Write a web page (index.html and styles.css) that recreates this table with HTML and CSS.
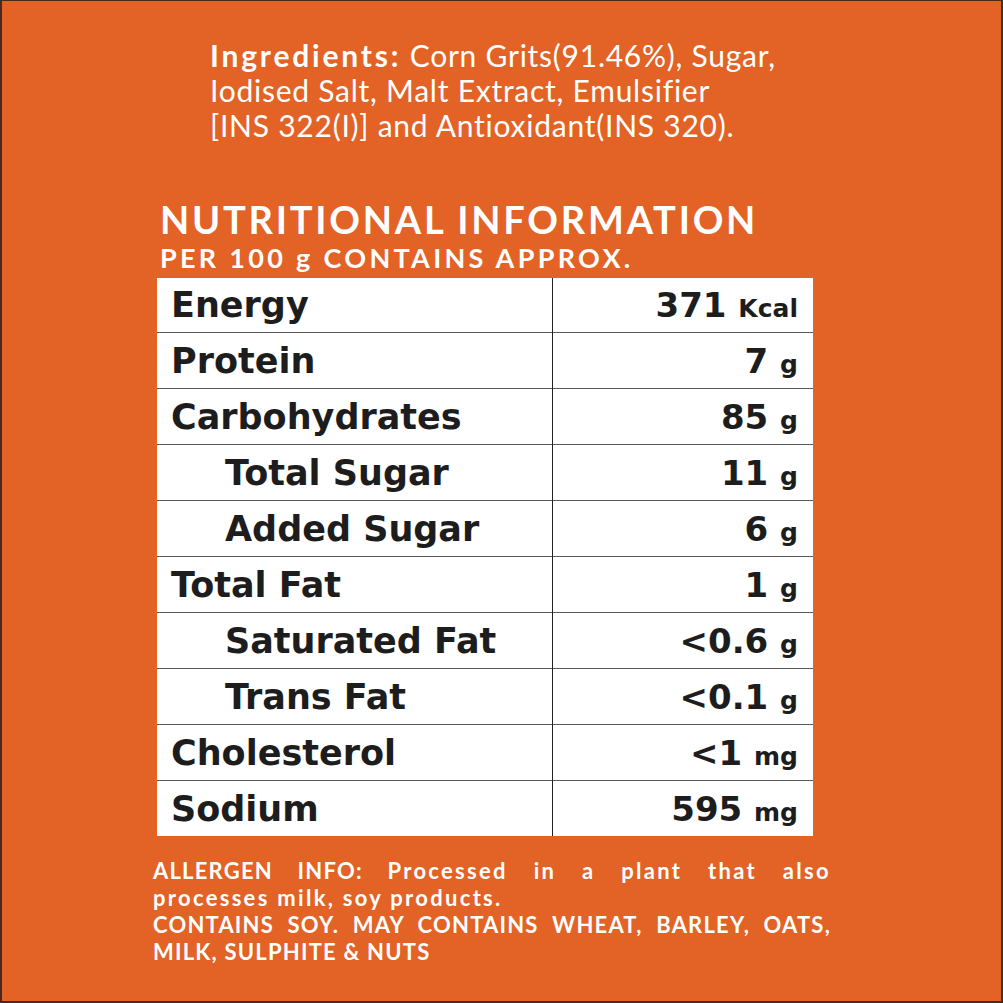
FILE: index.html
```html
<!DOCTYPE html>
<html>
<head>
<meta charset="utf-8">
<link rel="stylesheet" href="styles.css">
</head>
<body>
<div class="panel">
  <p class="ingredients"><b>Ingredients:</b> Corn Grits(91.46%), Sugar,<br>Iodised Salt, Malt Extract, Emulsifier<br>[INS 322(I)] and Antioxidant(INS 320).</p>
  <div class="heading">
    <h1>NUTRITIONAL INFORMATION</h1>
    <h2>PER 100 g CONTAINS APPROX.</h2>
  </div>
  <table class="facts">
    <colgroup><col class="c-name"><col class="c-val"></colgroup>
    <tr class="first"><td class="name">Energy</td><td class="val">371 <span>Kcal</span></td></tr>
    <tr><td class="name">Protein</td><td class="val">7 <span>g</span></td></tr>
    <tr><td class="name">Carbohydrates</td><td class="val">85 <span>g</span></td></tr>
    <tr><td class="name sub">Total Sugar</td><td class="val">11 <span>g</span></td></tr>
    <tr><td class="name sub">Added Sugar</td><td class="val">6 <span>g</span></td></tr>
    <tr><td class="name">Total Fat</td><td class="val">1 <span>g</span></td></tr>
    <tr><td class="name sub">Saturated Fat</td><td class="val">&lt;0.6 <span>g</span></td></tr>
    <tr><td class="name sub">Trans Fat</td><td class="val">&lt;0.1 <span>g</span></td></tr>
    <tr><td class="name">Cholesterol</td><td class="val">&lt;1 <span>mg</span></td></tr>
    <tr><td class="name">Sodium</td><td class="val">595 <span>mg</span></td></tr>
  </table>
  <div class="allergen">
    <p><span class="full">ALLERGEN INFO: <span class="lower">Processed in a plant that also</span></span><span class="lower">processes milk, soy products.</span></p>
    <p><span class="full">CONTAINS SOY. MAY CONTAINS WHEAT, BARLEY, OATS,</span> MILK, SULPHITE &amp; NUTS</p>
  </div>
</div>
</body>
</html>
```
FILE: styles.css
```css
html, body {
  margin: 0;
  padding: 0;
}
body {
  width: 1003px;
  height: 1003px;
  overflow: hidden;
  background: #e36225;
}
.panel {
  box-sizing: border-box;
  width: 1003px;
  height: 1003px;
  background: #e36225;
  border: 2px solid #4a2a18;
  border-top-width: 1px;
  font-family: Lato, "Open Sans", sans-serif;
  color: #fff;
  display: flex;
  flex-direction: column;
}
.ingredients {
  margin: 37px 0 0 208px;
  font-size: 30px;
  line-height: 35px;
  font-weight: 400;
  letter-spacing: 0.75px;
}
.ingredients b {
  font-weight: 700;
  letter-spacing: 2.8px;
}
.heading {
  margin: 56px 0 0 158px;
}
.heading h1 {
  margin: 0;
  font-size: 38px;
  line-height: 40px;
  font-weight: 700;
  letter-spacing: 2.75px;
}
.heading h2 {
  margin: 4px 0 0 0;
  font-size: 27px;
  line-height: 30px;
  font-weight: 700;
  letter-spacing: 3.3px;
}
.facts {
  margin: 5px 0 0 155px;
  width: 656px;
  table-layout: fixed;
  background: #fff;
  border-collapse: collapse;
  color: #1d1d1d;
  font-family: "DejaVu Sans", sans-serif;
}
.c-name {
  width: 395px;
}
.c-val {
  width: 261px;
}
.facts td {
  height: 55px;
  padding: 0;
  border-top: 1px solid #5a5a5a;
  font-weight: 700;
  vertical-align: middle;
  white-space: nowrap;
}
.facts tr.first td {
  border-top: none;
  height: 54px;
}
.facts td.name {
  padding-left: 14px;
  border-right: 1px solid #222;
  font-size: 35px;
}
.facts td.name.sub {
  padding-left: 68px;
}
.facts td.val {
  text-align: right;
  padding-right: 15px;
  font-size: 34px;
}
.facts td.val span {
  font-size: 25px;
}
.allergen {
  margin: 21px 0 0 151px;
  width: 678px;
  font-size: 22px;
  line-height: 27px;
  font-weight: 700;
  letter-spacing: 1.2px;
}
.allergen p {
  margin: 0;
}
.allergen .full {
  display: block;
  text-align: justify;
  text-align-last: justify;
}
.allergen .lower {
  letter-spacing: 2.3px;
}
```
